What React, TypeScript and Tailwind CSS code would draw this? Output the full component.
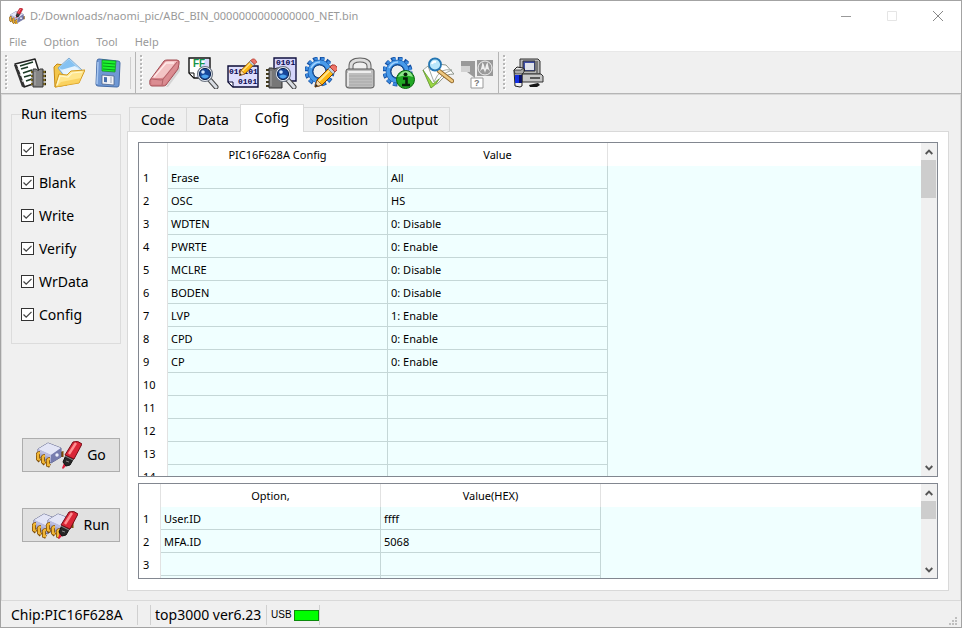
import { useState } from "react";
import type { ReactNode } from "react";
import { clsx } from "clsx";

const runItems = ["Erase", "Blank", "Write", "Verify", "WrData", "Config"];
const tabs = ["Code", "Data", "Cofig", "Position", "Output"];

const configRows = [
  ["Erase", "All"],
  ["OSC", "HS"],
  ["WDTEN", "0: Disable"],
  ["PWRTE", "0: Enable"],
  ["MCLRE", "0: Disable"],
  ["BODEN", "0: Disable"],
  ["LVP", "1: Enable"],
  ["CPD", "0: Enable"],
  ["CP", "0: Enable"],
  ["", ""],
  ["", ""],
  ["", ""],
  ["", ""],
  ["", ""],
];

const optionRows = [
  ["User.ID", "ffff"],
  ["MFA.ID", "5068"],
  ["", ""],
  ["", ""],
];

function Icon({ children }: { children: ReactNode }) {
  return (
    <svg width="32" height="32" viewBox="0 0 32 32" aria-hidden="true">
      {children}
    </svg>
  );
}

function Lens({ x = 0, y = 0 }: { x?: number; y?: number }) {
  return (
    <g transform={`translate(${x} ${y})`}>
      <path d="M19 20 L26 28" stroke="#444" strokeWidth="5" strokeLinecap="round" />
      <path d="M19 20 L26 28" stroke="#d9dde3" strokeWidth="3" strokeLinecap="round" />
      <circle cx="15" cy="15" r="7.5" fill="#e8edf5" stroke="#6d7683" strokeWidth="1.2" />
      <circle cx="15" cy="15" r="5.6" fill="#16479b" stroke="#0b2450" />
      <path d="M11 17a4.5 4.5 0 0 0 8 0q-4-3-8 0z" fill="#4da3ee" />
      <circle cx="13" cy="13" r="1.8" fill="#cfe6ff" />
    </g>
  );
}

function Pencil() {
  return (
    <g strokeLinejoin="round">
      <path d="M10 30 L12 23 L25 10 L30 15 L17 28 Z" fill="#fdb813" stroke="#7a3c00" />
      <path d="M13.5 24.5 L26.5 11.5" stroke="#ffe48a" strokeWidth="1.8" />
      <path d="M10 30 L12 23 L17 28 Z" fill="#f8dcae" stroke="#7a3c00" strokeWidth=".7" />
      <path d="M10 30l1-3 2 2z" fill="#222" />
      <path d="M23 12l2-2 5 5-2 2z" fill="#c6d0da" stroke="#596470" strokeWidth=".6" />
      <path d="M25 10l2-2q3-1 5 2t0 3l-2 2z" fill="#ee7468" stroke="#a32b20" strokeWidth=".8" />
    </g>
  );
}

function Gear() {
  return (
    <g>
      <circle cx="14.5" cy="14.5" r="13" fill="none" stroke="#1450a3" strokeWidth="4" strokeDasharray="4.4 2.4" />
      <circle cx="14.5" cy="14.5" r="12.8" fill="none" stroke="#3c8ade" strokeWidth="2.8" strokeDasharray="3.4 3.4" strokeDashoffset="-.5" />
      <circle cx="14.5" cy="14.5" r="9" fill="none" stroke="#1450a3" strokeWidth="5.6" />
      <circle cx="14.5" cy="14.5" r="9.3" fill="none" stroke="#489ae9" strokeWidth="3.8" />
      <path d="M6 11q3-6 9-6" fill="none" stroke="#a2d2ff" strokeWidth="1.4" />
      <circle cx="14.5" cy="14.5" r="6.5" fill="#efefef" stroke="#164887" />
    </g>
  );
}

function BitText({ x, y, children }: { x: number; y: number; children: string }) {
  return (
    <text x={x} y={y} fontFamily="Liberation Mono, monospace" fontSize="8" fontWeight="bold" fill="#080850">
      {children}
    </text>
  );
}

function ChipIcon() {
  return (
    <Icon>
      <path d="M1 7 L21 2 L28 24 L10 30 Z" fill="#fff" stroke="#222" strokeWidth="1.5" strokeLinejoin="round" />
      <path d="M0 8l3 0 8 21-3 1z" fill="#333" />
      <path d="M6 9l13-4M7 12l7-2M9 16l9-3M10 20l7-2M12 24l6-2" stroke="#1d3b27" strokeWidth="1.8" />
      <path d="M4 11l1 2M6 17l1 2M8 23l1 2" stroke="#ddd" />
      <path d="M17 15h15M17 19h15M17 23h15M17 27h15" stroke="#322b0d" strokeWidth="2.6" />
      <path d="M17 15h14M17 19h14M17 23h14M17 27h14" stroke="#d4ad30" strokeWidth="1.2" />
      <path d="M19 12h3q2 3 4 0h3v18H19z" fill="#858585" stroke="#363636" />
      <path d="M21 15v13" stroke="#b0b0b0" />
    </Icon>
  );
}

function OpenIcon() {
  return (
    <Icon>
      <path d="M1 10l3-3 6 1 3 3 8 1 3 3-10 13L2 30z" fill="#f3c64b" stroke="#c48710" />
      <path d="M16 1l13 12-14 11L5 11z" fill="#c3e3fb" stroke="#6a9bc8" strokeWidth=".8" />
      <path d="M16 2l8 8-14 3-4-2z" fill="#85c2f2" />
      <path d="M8 13l14-4 6 5-13 10z" fill="#e6f4ff" />
      <path d="M2 30l4-13 8 1 4-4 14-1-6 13z" fill="#ffe68c" stroke="#d3991d" strokeLinejoin="round" />
      <path d="M4 28l3-9 8 1 4-4 10-1" fill="none" stroke="#fff7cd" strokeWidth="1.2" />
      <path d="M3 30l5-5 20-4-2 5z" fill="#f8c94d" opacity=".7" />
    </Icon>
  );
}

function SaveIcon() {
  return (
    <Icon>
      <path d="M5 4q0-2 2-2l19 2q2 0 2 2l-1 22q0 2-2 2L6 29q-2 0-2-2z" fill="#6f98d4" stroke="#446ba6" />
      <path d="M6 5l-1 22" stroke="#a9c8f2" strokeWidth="1.5" />
      <path d="M10 3l14 1-1 11-13-1z" fill="#1cf22f" stroke="#16871f" strokeWidth=".7" />
      <path d="M11 6l12 1M11 9l12 1M11 12l12 1" stroke="#079d19" />
      <path d="M10 18l12 1v9l-12-1z" fill="#f1f3f7" stroke="#4c638c" strokeWidth=".8" />
      <path d="M12 20l3 .3v5l-3-.3z" fill="#496eaa" />
      <path d="M19 20v6" stroke="#c4cbd8" strokeWidth="2" />
    </Icon>
  );
}

function EraserIcon() {
  return (
    <Icon>
      <path d="M3 30h14l14-21v5L19 30z" fill="#c8c8c8" opacity=".7" />
      <path d="M1 23L15 4q1-1 3-1h10q3 0 2 4l-1 5-12 16q-1 1-3 1H3q-3 0-2-6z" fill="#d8858b" stroke="#a24e55" />
      <path d="M3 21L16 5q1-1 3-1h9L15 20q-1 1-3 1z" fill="#f3c4c5" />
      <path d="M3 22l10 1q2 0 3-2L29 5l-1 6-12 16H3z" fill="#dd9095" opacity=".7" />
      <path d="M2 22l10 1q2 0 3-2L28 5M14 22l-1 6" fill="none" stroke="#b2646a" />
      <path d="M5 20L17 6h8" fill="none" stroke="#ffe9e8" strokeWidth="1.3" />
    </Icon>
  );
}

function BlankIcon() {
  return (
    <Icon>
      <path d="M1 1h21v20H6l-5-5z" fill="#fff" stroke="#111" strokeWidth="1.4" />
      <path d="M1 16h5v5z" fill="#fff" stroke="#111" />
      <path d="M18 2h3v18H8z" fill="#d8d8fb" />
      <text x="5" y="10" fontFamily="Liberation Sans, sans-serif" fontSize="10" fontWeight="bold" fill="#14944a">FF</text>
      <Lens x={2} y={2} />
    </Icon>
  );
}

function WriteIcon() {
  return (
    <Icon>
      <path d="M1 9h30v21H6l-5-5z" fill="#dedefd" stroke="#0b0b35" strokeWidth="1.4" />
      <path d="M1 25h5v5z" fill="#fff" stroke="#0b0b35" />
      <BitText x={2} y={17}>010101</BitText>
      <BitText x={11} y={27}>0101</BitText>
      <g transform="translate(5 -4) scale(.75)">
        <Pencil />
      </g>
    </Icon>
  );
}

function VerifyIcon() {
  return (
    <Icon>
      <path d="M8 1h22v23H8z" fill="#d6d6fa" stroke="#11113f" strokeWidth="1.4" />
      <BitText x={10} y={8}>0101</BitText>
      <path d="M0 13h16M0 17h16M0 21h16M0 25h16M0 29h16" stroke="#443b1b" strokeWidth="2" />
      <path d="M3 11h3q2 2 5 0h5v20H3z" fill="#777" stroke="#333" />
      <path d="M5 14v15" stroke="#aaa" />
      <Lens x={2} y={2} />
    </Icon>
  );
}

function ConfigIcon() {
  return (
    <Icon>
      <Gear />
      <Pencil />
    </Icon>
  );
}

function LockIcon() {
  return (
    <Icon>
      <path d="M7 16V9q0-6 9-6t9 6v7" fill="none" stroke="#606060" strokeWidth="5" />
      <path d="M7 16V9q0-6 9-6t9 6v7" fill="none" stroke="#ddd" strokeWidth="3" />
      <path d="M2 14q0-2 2-2h24q2 0 2 2v15q0 2-3 2H5q-3 0-3-2z" fill="#bebebe" stroke="#555" />
      <path d="M4 14h23v2H4z" fill="#eee" />
      <path d="M4 19h24M4 22h24M4 25h24M4 28h24" stroke="#a8a8a8" />
      <path d="M4 16v13" stroke="#e5e5e5" strokeWidth="2" />
    </Icon>
  );
}

function InfoIcon() {
  return (
    <Icon>
      <Gear />
      <circle cx="22.5" cy="22.5" r="9" fill="#22a825" stroke="#08640d" />
      <path d="M15 20q3-6 8-6t7 6q-7-3-15 0z" fill="#8ee68a" />
      <path d="M20 21.5h3.5V28M19 28h8" fill="none" stroke="#061f08" strokeWidth="2.6" />
      <circle cx="22.5" cy="17.3" r="1.9" fill="#061f08" />
    </Icon>
  );
}

function InspectIcon() {
  return (
    <Icon>
      <path d="M6 9q6 1 9-2l9 1 8 9q-8 0-12 5-4 6-9 6z" fill="#fff" stroke="#8c958b" />
      <path d="M1 13l5-4 6 16q3-8 8-11 4-2 10-1-9 3-12 8-4 7-9 10z" fill="#fdfdfd" stroke="#8c958b" strokeWidth=".8" />
      <path d="M1 13l8 18q5-3 8-9-4 3-6 5z" fill="#9bd745" stroke="#5d9826" strokeWidth=".7" />
      <path d="M17 14l13 10" stroke="#8f672b" strokeWidth="4.4" strokeLinecap="round" />
      <path d="M17 14l13 10" stroke="#efc980" strokeWidth="2.6" strokeLinecap="round" />
      <circle cx="13" cy="7.5" r="6" fill="#b9e7fb" stroke="#2375b2" strokeWidth="1.8" />
      <path d="M10 7q1-3 4-2" fill="none" stroke="#fff" strokeWidth="2" />
    </Icon>
  );
}

function VendorIcon() {
  return (
    <Icon>
      <path d="M0 4h14v17L6 15h3V9H0z" fill="#999" />
      <path d="M0 9h9v6H0z" fill="#d2d2d2" />
      <path d="M16 3h16v16H16z" fill="#999" />
      <circle cx="24" cy="11" r="7" fill="none" stroke="#efefef" />
      <path d="M18.500 15q2-3 3-10Q23 7 24 12q1-5 2.500-7 1 7 3 10-2-3-3.500-3-1 0-2 4-1-4-2-4-1.500 0-3.500 3z" fill="#efefef" />
      <path d="M10 21h12v10H10z" fill="#fff" stroke="#999" />
      <text x="13" y="29" fontFamily="Liberation Sans, sans-serif" fontSize="9" fontWeight="bold" fill="#777">?</text>
    </Icon>
  );
}

function DeviceIcon() {
  return (
    <Icon>
      <path d="M8 2h18l2 2v13H8z" fill="#b8b8b8" stroke="#333" />
      <path d="M11 4h12v10H11z" fill="#3f4fa8" stroke="#333" />
      <path d="M13 6h9v7h-9z" fill="#dfe2ea" />
      <path d="M25 4v12" stroke="#777" strokeWidth="2" />
      <path d="M10 17h19l2 2v6H10z" fill="#c7c7c7" stroke="#333" />
      <path d="M18 21h10" stroke="#333" strokeWidth="1.5" />
      <path d="M17 28l9-2 2 2-3 2h-7z" fill="#171717" />
      <path d="M2 13l3-3 6 1 2 2-3 3v13l-2 1-5-1z" fill="#eee" stroke="#222" />
      <path d="M2 13h7l3-2v4l-2 2H3z" fill="#a9a9a9" stroke="#222" strokeWidth=".8" />
      <path d="M3 18h4v8H3z" fill="#1530e0" />
      <path d="M7 18h3v8H7z" fill="#0b1263" />
    </Icon>
  );
}

function Dip({ x, y }: { x: number; y: number }) {
  return (
    <g transform={`translate(${x} ${y})`}>
      <path d="M23 11l3-1v4" fill="none" stroke="#7c4c08" strokeWidth="3" />
      <path d="M2 6L12 0l13 5v9l-10 6L2 13z" fill="#a9acd2" stroke="#555a83" strokeWidth=".9" strokeLinejoin="round" />
      <path d="M2 6L12 0l13 5-10 7z" fill="#e3e5f6" />
      <path d="M15 12v8l10-6V5z" fill="#777cae" />
      <path d="M2 6l13 6v3L2 9z" fill="#bbbde0" />
      <circle cx="21" cy="12" r="1.7" fill="#eceefb" />
      <path d="M4 10q-3 0-2 3v3l2 2M9 13q-3 0-2 3v3l2 2M14 16q-3 0-2 3v3l2 1" fill="none" stroke="#7c4c08" strokeWidth="4" />
      <path d="M4 10q-3 0-2 3v3l2 1M9 13q-3 0-2 3v3l2 1M14 16q-3 0-2 3v3l2 0" fill="none" stroke="#f0b637" strokeWidth="2.4" />
    </g>
  );
}

function Marker({ x, y }: { x: number; y: number }) {
  return (
    <g transform={`translate(${x} ${y})`}>
      <path d="M0 27l2-5 3 2-4 4z" fill="#dc1f3c" />
      <path d="M1 21l3-7 8 3-4 7-4 1z" fill="#262626" stroke="#111" />
      <path d="M3 14L11 1q5-2 9 2l-8 15z" fill="#da2637" stroke="#770d18" strokeLinejoin="round" />
      <path d="M7 13l7-11" stroke="#ff8e91" strokeWidth="2.4" />
      <path d="M3 15l8 4M4 20l3 1" stroke="#888" />
    </g>
  );
}

function GoIcon({ double }: { double?: boolean }) {
  return (
    <svg width="46" height="28" viewBox="0 0 46 28" aria-hidden="true">
      <Dip x={0} y={double ? 3 : 2} />
      {double && <Dip x={14} y={3} />}
      <Marker x={26} y={0} />
    </svg>
  );
}

function AppIcon() {
  return (
    <svg width="16" height="16" viewBox="0 0 46 46" aria-hidden="true">
      <g transform="translate(1 10) scale(1.6)">
        <Dip x={0} y={0} />
      </g>
      <g transform="translate(19 0) scale(1.05)">
        <Marker x={0} y={0} />
      </g>
    </svg>
  );
}

function Grip() {
  return (
    <svg width="3" height="36" viewBox="0 0 3 36" aria-hidden="true">
      <path d="M2 1v34" stroke="#fff" strokeWidth="2" strokeDasharray="2 2" />
      <path d="M1 0v34" stroke="#b8b8b8" strokeWidth="2" strokeDasharray="2 2" />
    </svg>
  );
}

function ToolButton({ label, children }: { label: string; children: ReactNode }) {
  return (
    <button type="button" aria-label={label} className="pl-[3px] pr-1">
      {children}
    </button>
  );
}

function ScrollArrow({ down }: { down?: boolean }) {
  return (
    <button type="button" aria-label={down ? "Scroll down" : "Scroll up"} className="flex h-[17px] w-[15px] items-center justify-center">
      <svg width="8" height="6" viewBox="0 0 8 6" aria-hidden="true">
        <path d={down ? "M.7 1L4 4.3 7.3 1" : "M.7 5L4 1.7 7.3 5"} fill="none" stroke="#555" strokeWidth="1.9" />
      </svg>
    </button>
  );
}

interface GridProps {
  headers: string[];
  rows: string[][];
  narrow?: boolean;
  className: string;
}

function Grid({ headers, rows, narrow, className }: GridProps) {
  return (
    <div className={clsx("flex overflow-hidden border border-[#828790] bg-[#f0ffff]", className)}>
      <div className="min-w-0 flex-1 overflow-hidden">
        <table className="w-full table-fixed border-separate border-spacing-0 text-left text-[11px]">
          <colgroup>
            <col className={narrow ? "w-[22px]" : "w-[29px]"} />
            <col className="w-[220px]" />
            <col className="w-[220px]" />
            <col />
          </colgroup>
          <thead>
            <tr className="h-[23px] bg-white text-center">
              <td className="border-r border-[#e2e2e2]" />
              {headers.map((h) => (
                <th key={h} scope="col" className="border-r border-[#e2e2e2] p-0 pt-0.5 font-normal">
                  {h}
                </th>
              ))}
              <td />
            </tr>
          </thead>
          <tbody>
            {rows.map(([name, value], i) => (
              <tr key={i} className="h-[23px]">
                <th scope="row" className="border-r border-[#e2e2e2] bg-white p-0 pt-0.5 pl-1 font-normal">
                  {i + 1}
                </th>
                <td className="border-r border-b border-[#c5d7d7] p-0 pt-0.5 pl-[3px]">{name}</td>
                <td className="border-r border-b border-[#c5d7d7] p-0 pt-0.5 pl-[3px]">{value}</td>
                <td />
              </tr>
            ))}
          </tbody>
        </table>
      </div>
      <div className="flex w-4 flex-col bg-[#f0f0f0]">
        <ScrollArrow />
        <div className="flex-1">
          <div className={clsx("w-[15px] bg-[#cdcdcd]", narrow ? "h-[18px]" : "h-[38px]")} />
        </div>
        <ScrollArrow down />
      </div>
    </div>
  );
}

export default function App() {
  const [active, setActive] = useState("Cofig");

  return (
    <div className="flex h-screen flex-col overflow-hidden border border-[#a3a3a3] bg-[#f0f0f0] font-['Noto_Sans','Open_Sans',sans-serif] text-black">
      <header className="flex h-[30px] shrink-0 items-center bg-white pl-2">
        <AppIcon />
        <h1 className="ml-[5px] flex-1 truncate text-[11px] text-[#999]">
          D:/Downloads/naomi_pic/ABC_BIN_0000000000000000_NET.bin
        </h1>
        <button type="button" aria-label="Minimize" className="flex w-[46px] justify-center">
          <svg width="10" height="10" viewBox="0 0 10 10"><path d="M0 5.5h10" stroke="#999" /></svg>
        </button>
        <button type="button" aria-label="Maximize" disabled className="flex w-[46px] justify-center">
          <svg width="10" height="10" viewBox="0 0 10 10"><path d="M.5.5h9v9h-9z" fill="none" stroke="#e5e5e5" /></svg>
        </button>
        <button type="button" aria-label="Close" className="flex w-[46px] justify-center">
          <svg width="10" height="10" viewBox="0 0 10 10"><path d="M0 0l10 10M10 0L0 10" stroke="#888" /></svg>
        </button>
      </header>

      <nav className="flex h-5 shrink-0 items-end gap-[17px] bg-white pb-px pl-2 text-[11px] text-[#999]">
        {["File", "Option", "Tool", "Help"].map((m) => (
          <button key={m} type="button">{m}</button>
        ))}
      </nav>

      <div className="flex h-[43px] shrink-0 items-center border-t border-b border-t-[#e8e8e8] border-b-[#b5b5b5] pl-1">
        <Grip />
        <div className="ml-[3px] flex">
          <ToolButton label="Select chip"><ChipIcon /></ToolButton>
          <ToolButton label="Open"><OpenIcon /></ToolButton>
          <ToolButton label="Save"><SaveIcon /></ToolButton>
        </div>
        <div className="ml-0.5 h-8 border-l border-[#cfcfcf]" />
        <div className="ml-1 h-full border-l border-[#b5b5b5]" />
        <div className="mr-[3px] ml-1">
          <Grip />
        </div>
        <div className="flex">
          <ToolButton label="Erase chip"><EraserIcon /></ToolButton>
          <ToolButton label="Blank check"><BlankIcon /></ToolButton>
          <ToolButton label="Write chip"><WriteIcon /></ToolButton>
          <ToolButton label="Verify chip"><VerifyIcon /></ToolButton>
          <ToolButton label="Write config"><ConfigIcon /></ToolButton>
          <ToolButton label="Lock"><LockIcon /></ToolButton>
          <ToolButton label="Chip info"><InfoIcon /></ToolButton>
          <ToolButton label="Inspect"><InspectIcon /></ToolButton>
          <ToolButton label="Vendor"><VendorIcon /></ToolButton>
        </div>
        <div className="ml-px h-full border-l border-[#b5b5b5]" />
        <div className="mr-[3px] ml-1">
          <Grip />
        </div>
        <ToolButton label="Device test"><DeviceIcon /></ToolButton>
      </div>

      <main className="flex min-h-0 flex-1 border border-[#d9d9d9] pr-[11px] pb-[9px]">
        <aside className="flex w-[125px] shrink-0 flex-col pt-[9px] pr-1.5 pl-[9px] text-sm">
          <fieldset className="border border-[#dcdcdc] px-[9px] pt-[9px] pb-3">
            <legend>Run items</legend>
            <div className="flex flex-col">
              {runItems.map((item) => (
                <label key={item} className="flex h-[33px] items-center gap-[5px]">
                  <span className="grid">
                    <input
                      type="checkbox"
                      defaultChecked
                      className="peer col-start-1 row-start-1 size-[13px] appearance-none border border-[#333] bg-white"
                    />
                    <svg
                      width="13"
                      height="13"
                      viewBox="0 0 13 13"
                      aria-hidden="true"
                      className="pointer-events-none invisible col-start-1 row-start-1 peer-checked:visible"
                    >
                      <path d="M2.5 6.5l2.7 2.7 5.3-5.3" fill="none" stroke="#444" strokeWidth="1.3" />
                    </svg>
                  </span>
                  {item}
                </label>
              ))}
            </div>
          </fieldset>
          <div className="mt-[94px] flex flex-col gap-9 pr-px pl-[11px]">
            <button type="button" className="flex h-[34px] items-center justify-center gap-[5px] border border-[#adadad] bg-[#e1e1e1]">
              <GoIcon /> Go
            </button>
            <button type="button" className="flex h-[34px] items-center justify-center gap-[5px] border border-[#adadad] bg-[#e1e1e1]">
              <GoIcon double /> Run
            </button>
          </div>
        </aside>

        <section className="flex min-w-0 flex-1 flex-col pt-[9px]">
          <div role="tablist" className="z-10 -mb-px flex items-end pl-0.5">
            {tabs.map((tab) => (
              <button
                key={tab}
                type="button"
                role="tab"
                aria-selected={tab === active}
                onClick={() => setActive(tab)}
                className={clsx(
                  "-mr-px border border-[#d9d9d9] text-sm",
                  tab === active ? "h-7 border-b-white bg-white px-3.5" : "h-[25px] px-[11px]",
                )}
              >
                {tab}
              </button>
            ))}
          </div>
          <div role="tabpanel" className="flex min-h-0 flex-1 flex-col gap-1.5 border border-[#d9d9d9] bg-white p-2.5 pb-[11px]">
            <Grid headers={["PIC16F628A Config", "Value"]} rows={configRows} className="min-h-0 flex-1" />
            <Grid headers={["Option,", "Value(HEX)"]} rows={optionRows} narrow className="h-24 shrink-0" />
          </div>
        </section>
      </main>

      <footer className="flex h-[26px] shrink-0 items-center pt-0.5 pl-2.5 text-sm whitespace-nowrap">
        <span className="w-[126px]">Chip:PIC16F628A</span>
        <div className="h-5 w-[14px] border-x border-[#d0d0d0]" />
        <span className="w-[115px] pl-1">top3000 ver6.23</span>
        <div className="flex h-5 items-center gap-0.5 border-x border-[#d0d0d0] pl-1 font-['Liberation_Sans',sans-serif] text-[10px]">
          USB
          <span className="h-[11px] w-[25px] border border-[#0a8a0a] bg-[#00ff00]" />
        </div>
        <svg width="9" height="9" viewBox="0 0 9 9" aria-hidden="true" className="mt-3 mr-[3px] ml-auto">
          <path d="M6 0h2v2H6zM3 3h2v2H3zM6 3h2v2H6zM0 6h2v2H0zM3 6h2v2H3zM6 6h2v2H6z" fill="#bfbfbf" />
        </svg>
      </footer>
    </div>
  );
}
